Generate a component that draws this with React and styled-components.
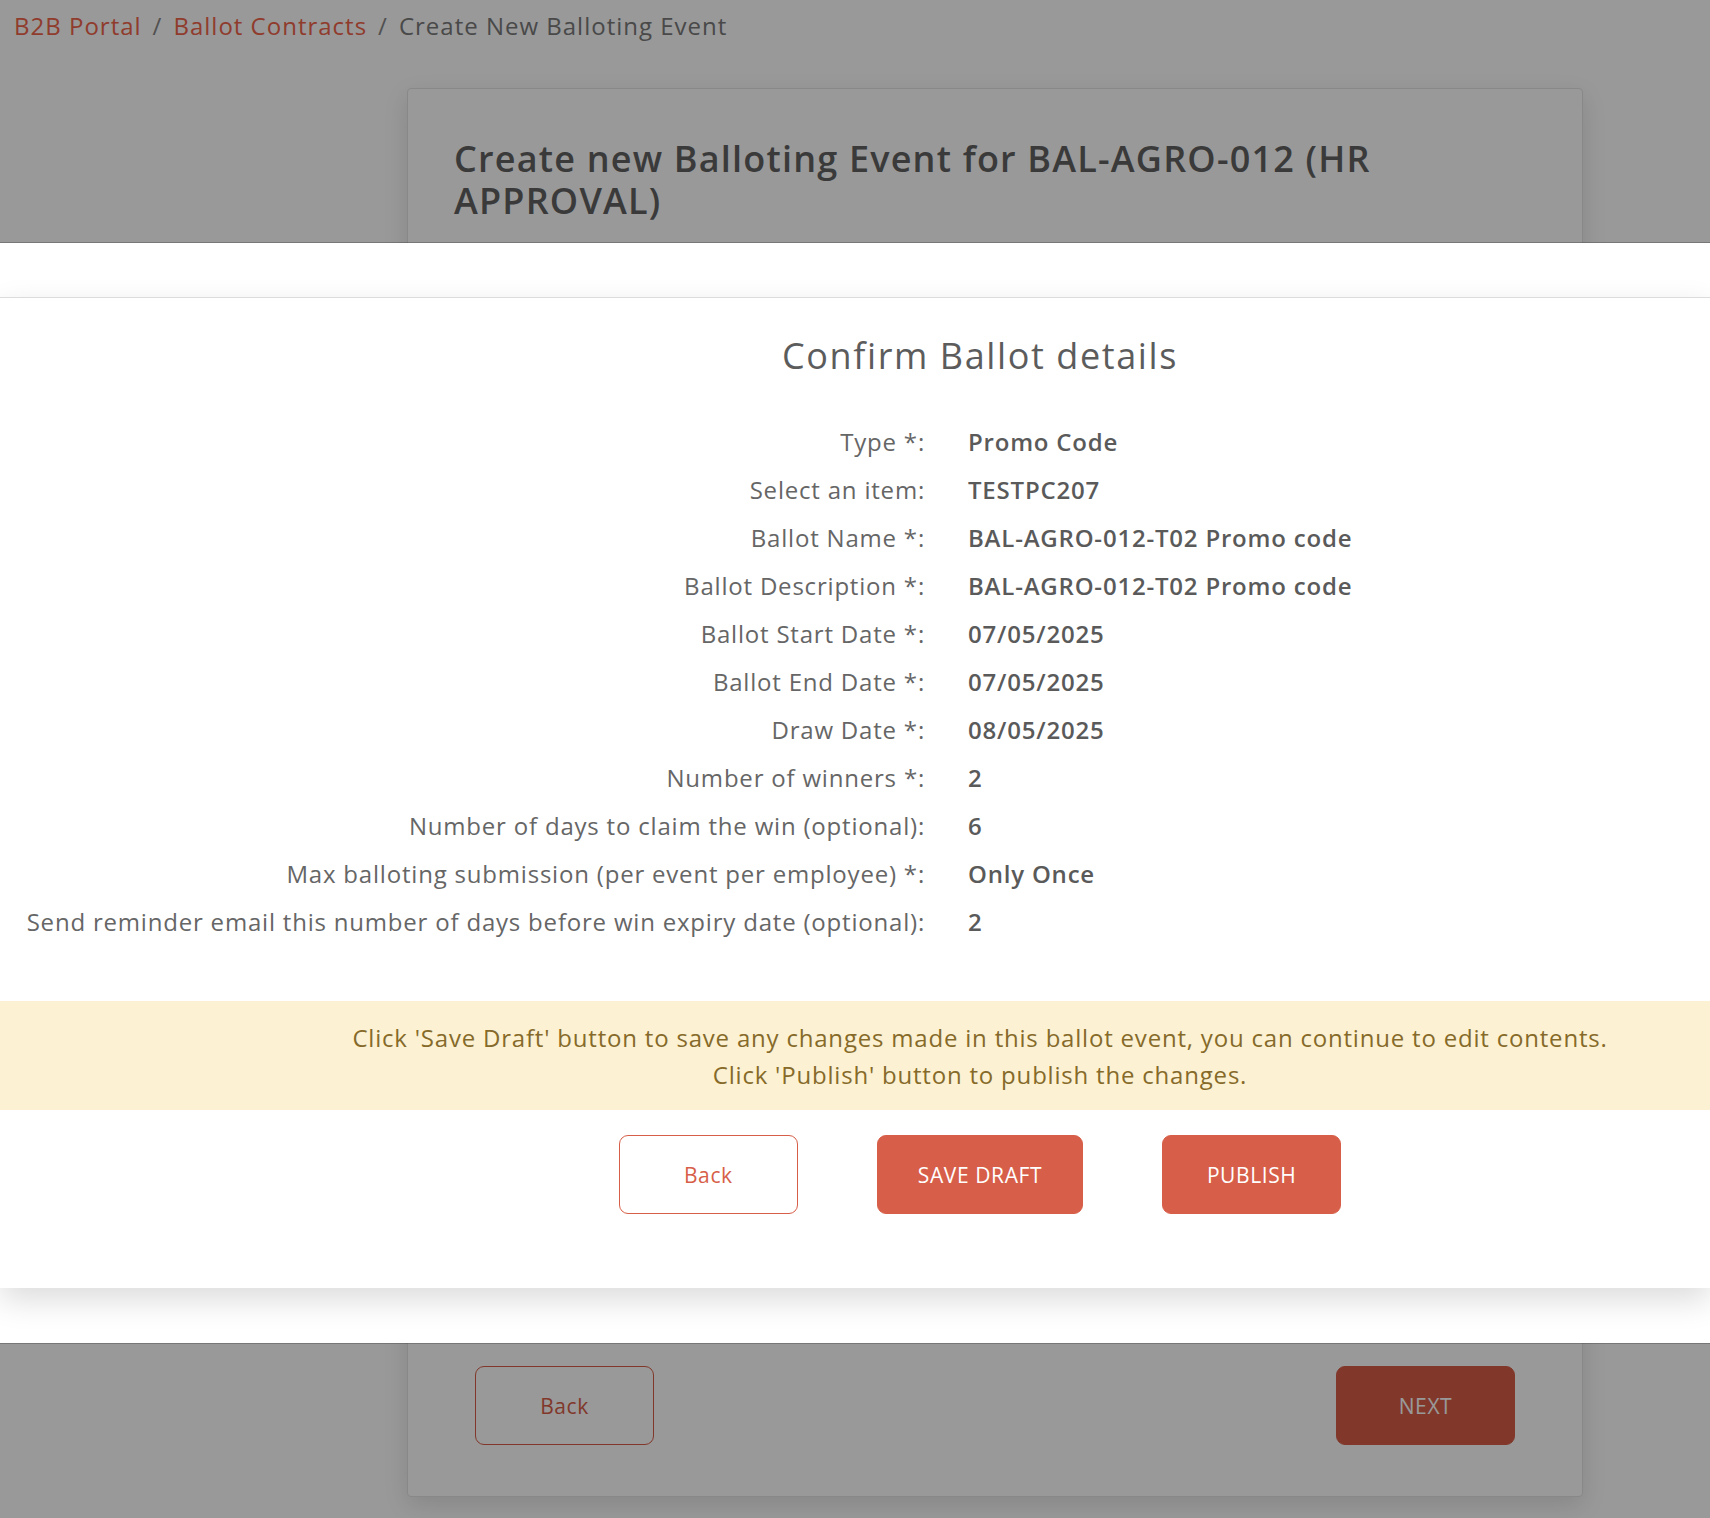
import React from 'react';
import styled, { createGlobalStyle } from 'styled-components';

const GlobalStyle = createGlobalStyle`
  html, body {
    margin: 0;
    padding: 0;
  }
  body {
    font-family: "Open Sans", "Liberation Sans", sans-serif;
    background: #fff;
    color: #666;
  }
  * {
    box-sizing: border-box;
  }
`;

const Page = styled.div`
  position: relative;
  width: 1710px;
  height: 1518px;
  overflow: hidden;
`;

const Breadcrumb = styled.nav`
  display: flex;
  align-items: center;
  gap: 11px;
  height: 52px;
  padding: 10px 14px;
  font-size: 24px;
  line-height: 32px;
  letter-spacing: 1px;
`;

const Crumb = styled.a`
  color: ${(p) => (p.$current ? '#7a7a7a' : '#f0644c')};
  text-decoration: none;
`;

const Sep = styled.span`
  color: #888;
`;

const EventCard = styled.section`
  margin: 36px 0 0 407px;
  width: 1176px;
  background: #fff;
  border: 1px solid #e3e3e3;
  border-radius: 4px;
  box-shadow: 0 8px 24px rgba(0, 0, 0, 0.12);
`;

const EventTitle = styled.h1`
  margin: 0;
  padding: 49px 150px 0 46px;
  font-size: 36px;
  line-height: 42px;
  font-weight: 600;
  letter-spacing: 1.2px;
  color: #626262;
`;

const FormBody = styled.div`
  height: 1144px;
`;

const CardFooter = styled.div`
  display: flex;
  justify-content: space-between;
  padding: 0 67px 51px;
`;

const Button = styled.button`
  min-width: 179px;
  height: 79px;
  padding: 0 40px;
  border-radius: 9px;
  border: 1px solid #d75e48;
  background: ${(p) => (p.$solid ? '#d75e48' : '#fff')};
  color: ${(p) => (p.$solid ? '#fff' : '#d75e48')};
  font-family: inherit;
  font-size: 21px;
  letter-spacing: 0.6px;
  text-transform: ${(p) => (p.$caps ? 'uppercase' : 'none')};
  cursor: pointer;
`;

const Backdrop = styled.div`
  position: absolute;
  inset: 0;
  z-index: 10;
  background: rgba(0, 0, 0, 0.4);
`;

const Modal = styled.div`
  position: absolute;
  top: 243px;
  left: 0;
  right: 0;
  z-index: 20;
  padding: 54px 0 55px;
  background: #fff;
  box-shadow: 0 0 0 1px rgba(0, 0, 0, 0.22);
`;

const ModalCard = styled.div`
  padding: 37px 0 74px;
  background: #fff;
  border-top: 1px solid #dcdcdc;
  box-shadow: 0 12px 30px rgba(0, 0, 0, 0.14);
`;

const ModalTitle = styled.h2`
  margin: 0;
  padding-left: 250px;
  text-align: center;
  font-size: 36px;
  line-height: 41px;
  font-weight: 400;
  letter-spacing: 1.6px;
  color: #5c5c5c;
`;

const DetailGrid = styled.div`
  display: grid;
  grid-template-columns: 925px 1fr;
  grid-auto-rows: 48px;
  align-items: center;
  column-gap: 43px;
  margin-top: 41px;
  font-size: 24px;
  letter-spacing: 0.8px;
`;

const Label = styled.div`
  text-align: right;
  white-space: nowrap;
  color: #666;
`;

const Value = styled.div`
  color: #5a5a5a;
  font-weight: 600;
`;

const Notice = styled.div`
  margin-top: 56px;
  padding: 18px 0 17px 250px;
  background: #fcf2d3;
  color: #866a2a;
  text-align: center;
  font-size: 24px;
  line-height: 37px;
  letter-spacing: 0.8px;
`;

const Actions = styled.div`
  display: flex;
  justify-content: center;
  gap: 79px;
  margin-top: 25px;
  padding-left: 250px;
`;

const details = [
  ['Type *:', 'Promo Code'],
  ['Select an item:', 'TESTPC207'],
  ['Ballot Name *:', 'BAL-AGRO-012-T02 Promo code'],
  ['Ballot Description *:', 'BAL-AGRO-012-T02 Promo code'],
  ['Ballot Start Date *:', '07/05/2025'],
  ['Ballot End Date *:', '07/05/2025'],
  ['Draw Date *:', '08/05/2025'],
  ['Number of winners *:', '2'],
  ['Number of days to claim the win (optional):', '6'],
  ['Max balloting submission (per event per employee) *:', 'Only Once'],
  ['Send reminder email this number of days before win expiry date (optional):', '2'],
];

const App = () => {
  return (
    <Page>
      <GlobalStyle />
      <Breadcrumb>
        <Crumb href="#">B2B Portal</Crumb>
        <Sep>/</Sep>
        <Crumb href="#">Ballot Contracts</Crumb>
        <Sep>/</Sep>
        <Crumb $current>Create New Balloting Event</Crumb>
      </Breadcrumb>

      <EventCard>
        <EventTitle>Create new Balloting Event for BAL-AGRO-012 (HR APPROVAL)</EventTitle>
        <FormBody />
        <CardFooter>
          <Button>Back</Button>
          <Button $solid $caps>Next</Button>
        </CardFooter>
      </EventCard>

      <Backdrop />

      <Modal>
        <ModalCard>
          <ModalTitle>Confirm Ballot details</ModalTitle>
          <DetailGrid>
            {details.map(([label, value]) => (
              <React.Fragment key={label}>
                <Label>{label}</Label>
                <Value>{value}</Value>
              </React.Fragment>
            ))}
          </DetailGrid>
          <Notice>
            Click 'Save Draft' button to save any changes made in this ballot event, you can continue to edit contents.
            <br />
            Click 'Publish' button to publish the changes.
          </Notice>
          <Actions>
            <Button>Back</Button>
            <Button $solid $caps>Save Draft</Button>
            <Button $solid $caps>Publish</Button>
          </Actions>
        </ModalCard>
      </Modal>
    </Page>
  );
};

export default App;
